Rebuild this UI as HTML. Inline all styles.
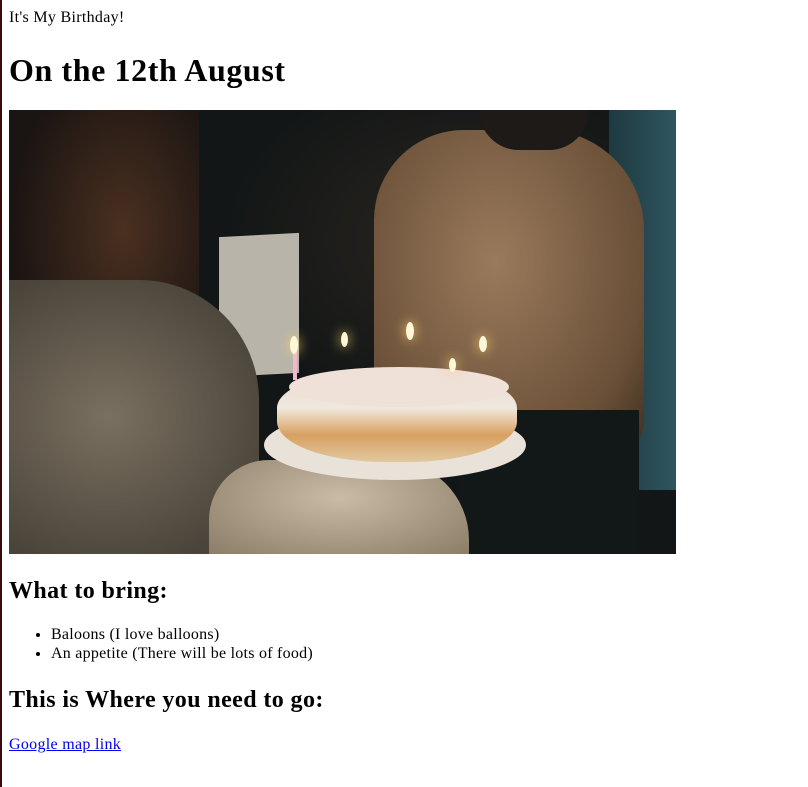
<!DOCTYPE html>
<html><head><meta charset="utf-8"><style>
html,body{margin:0;padding:0;background:#fff;width:808px;height:787px;overflow:hidden}
body{position:relative;font-family:"Liberation Serif",serif;color:#000}
.bl{position:absolute;left:0;top:0;width:2px;height:787px;background:#3a0a0a}
.a{position:absolute;left:9px;white-space:nowrap;margin:0}
.p{font-size:16px;line-height:18px;letter-spacing:0.3px}
h1.a{font-size:32px;line-height:37px;font-weight:bold;letter-spacing:0.6px}
h2.a{font-size:24px;line-height:28px;font-weight:bold;letter-spacing:0.4px}
.img{position:absolute;left:9px;top:110px;width:667px;height:444px;overflow:hidden;background:#141a1a}
.img div{position:absolute}
a{color:#00e}
ul{position:absolute;left:9px;top:625px;margin:0;padding-left:42px;font-size:16px;line-height:19px;letter-spacing:0.25px}
</style></head><body>
<div class="bl"></div>
<p class="a p" style="top:9px">It's My Birthday!</p>
<h1 class="a" style="top:52px">On the 12th August</h1>
<div class="img">
  <div style="left:0;top:0;width:667px;height:444px;background:radial-gradient(ellipse 300px 220px at 450px 130px,#2a2520,#121616 80%)"></div>
  <div style="left:600px;top:0;width:67px;height:380px;background:linear-gradient(90deg,#1e3a40,#2f5560)"></div>
  <div style="left:210px;top:125px;width:80px;height:140px;background:#b8b4aa;transform:skewY(-3deg)"></div>
  <div style="left:365px;top:20px;width:270px;height:330px;background:radial-gradient(ellipse at 45% 40%,#9a7a5c,#6a5038 70%,#3a2c20);border-radius:90px 100px 40px 40px"></div>
  <div style="left:450px;top:300px;width:180px;height:144px;background:#121818"></div>
  <div style="left:470px;top:0;width:110px;height:40px;background:#1d1a18;border-radius:0 0 50px 50px"></div>
  <div style="left:0;top:0;width:190px;height:300px;background:radial-gradient(ellipse at 60% 40%,#4a3020,#1a1412 70%);border-radius:0 0 120px 0"></div>
  <div style="left:0;top:170px;width:250px;height:274px;background:radial-gradient(ellipse at 40% 50%,#7a7060,#4a443a 80%);border-radius:0 120px 0 0"></div>
  <div style="left:200px;top:350px;width:260px;height:94px;background:radial-gradient(ellipse at 50% 40%,#c9bba5,#8c7d68);border-radius:60px 80px 0 0"></div>
  <div style="left:255px;top:300px;width:262px;height:70px;background:#e8e2d8;border-radius:50%"></div>
  <div style="left:268px;top:262px;width:240px;height:90px;background:linear-gradient(#e4d8ce,#f0e8de 40%,#d8a060 70%,#e0c8a0);border-radius:40% 40% 45% 45%"></div>
  <div style="left:280px;top:257px;width:220px;height:40px;background:#efe0d8;border-radius:50%"></div>
  <div style="left:284px;top:230px;width:4px;height:40px;background:#f0b8d0"></div>
  <div style="left:281px;top:226px;width:8px;height:18px;background:#fff8d8;border-radius:50%;box-shadow:0 0 12px #ffd070"></div>
  <div style="left:332px;top:222px;width:7px;height:15px;background:#fff8d8;border-radius:50%;box-shadow:0 0 12px #ffd070"></div>
  <div style="left:397px;top:212px;width:8px;height:18px;background:#fff8d8;border-radius:50%;box-shadow:0 0 12px #ffd070"></div>
  <div style="left:470px;top:226px;width:8px;height:16px;background:#fff8d8;border-radius:50%;box-shadow:0 0 12px #ffd070"></div>
  <div style="left:440px;top:248px;width:7px;height:14px;background:#fff8d8;border-radius:50%;box-shadow:0 0 12px #ffd070"></div>
</div>
<h2 class="a" style="top:577px">What to bring:</h2>
<ul><li>Baloons (I love balloons)</li><li>An appetite (There will be lots of food)</li></ul>
<h2 class="a" style="top:686px">This is Where you need to go:</h2>
<p class="a p" style="top:736px"><a href="#">Google map link</a></p>
</body></html>
